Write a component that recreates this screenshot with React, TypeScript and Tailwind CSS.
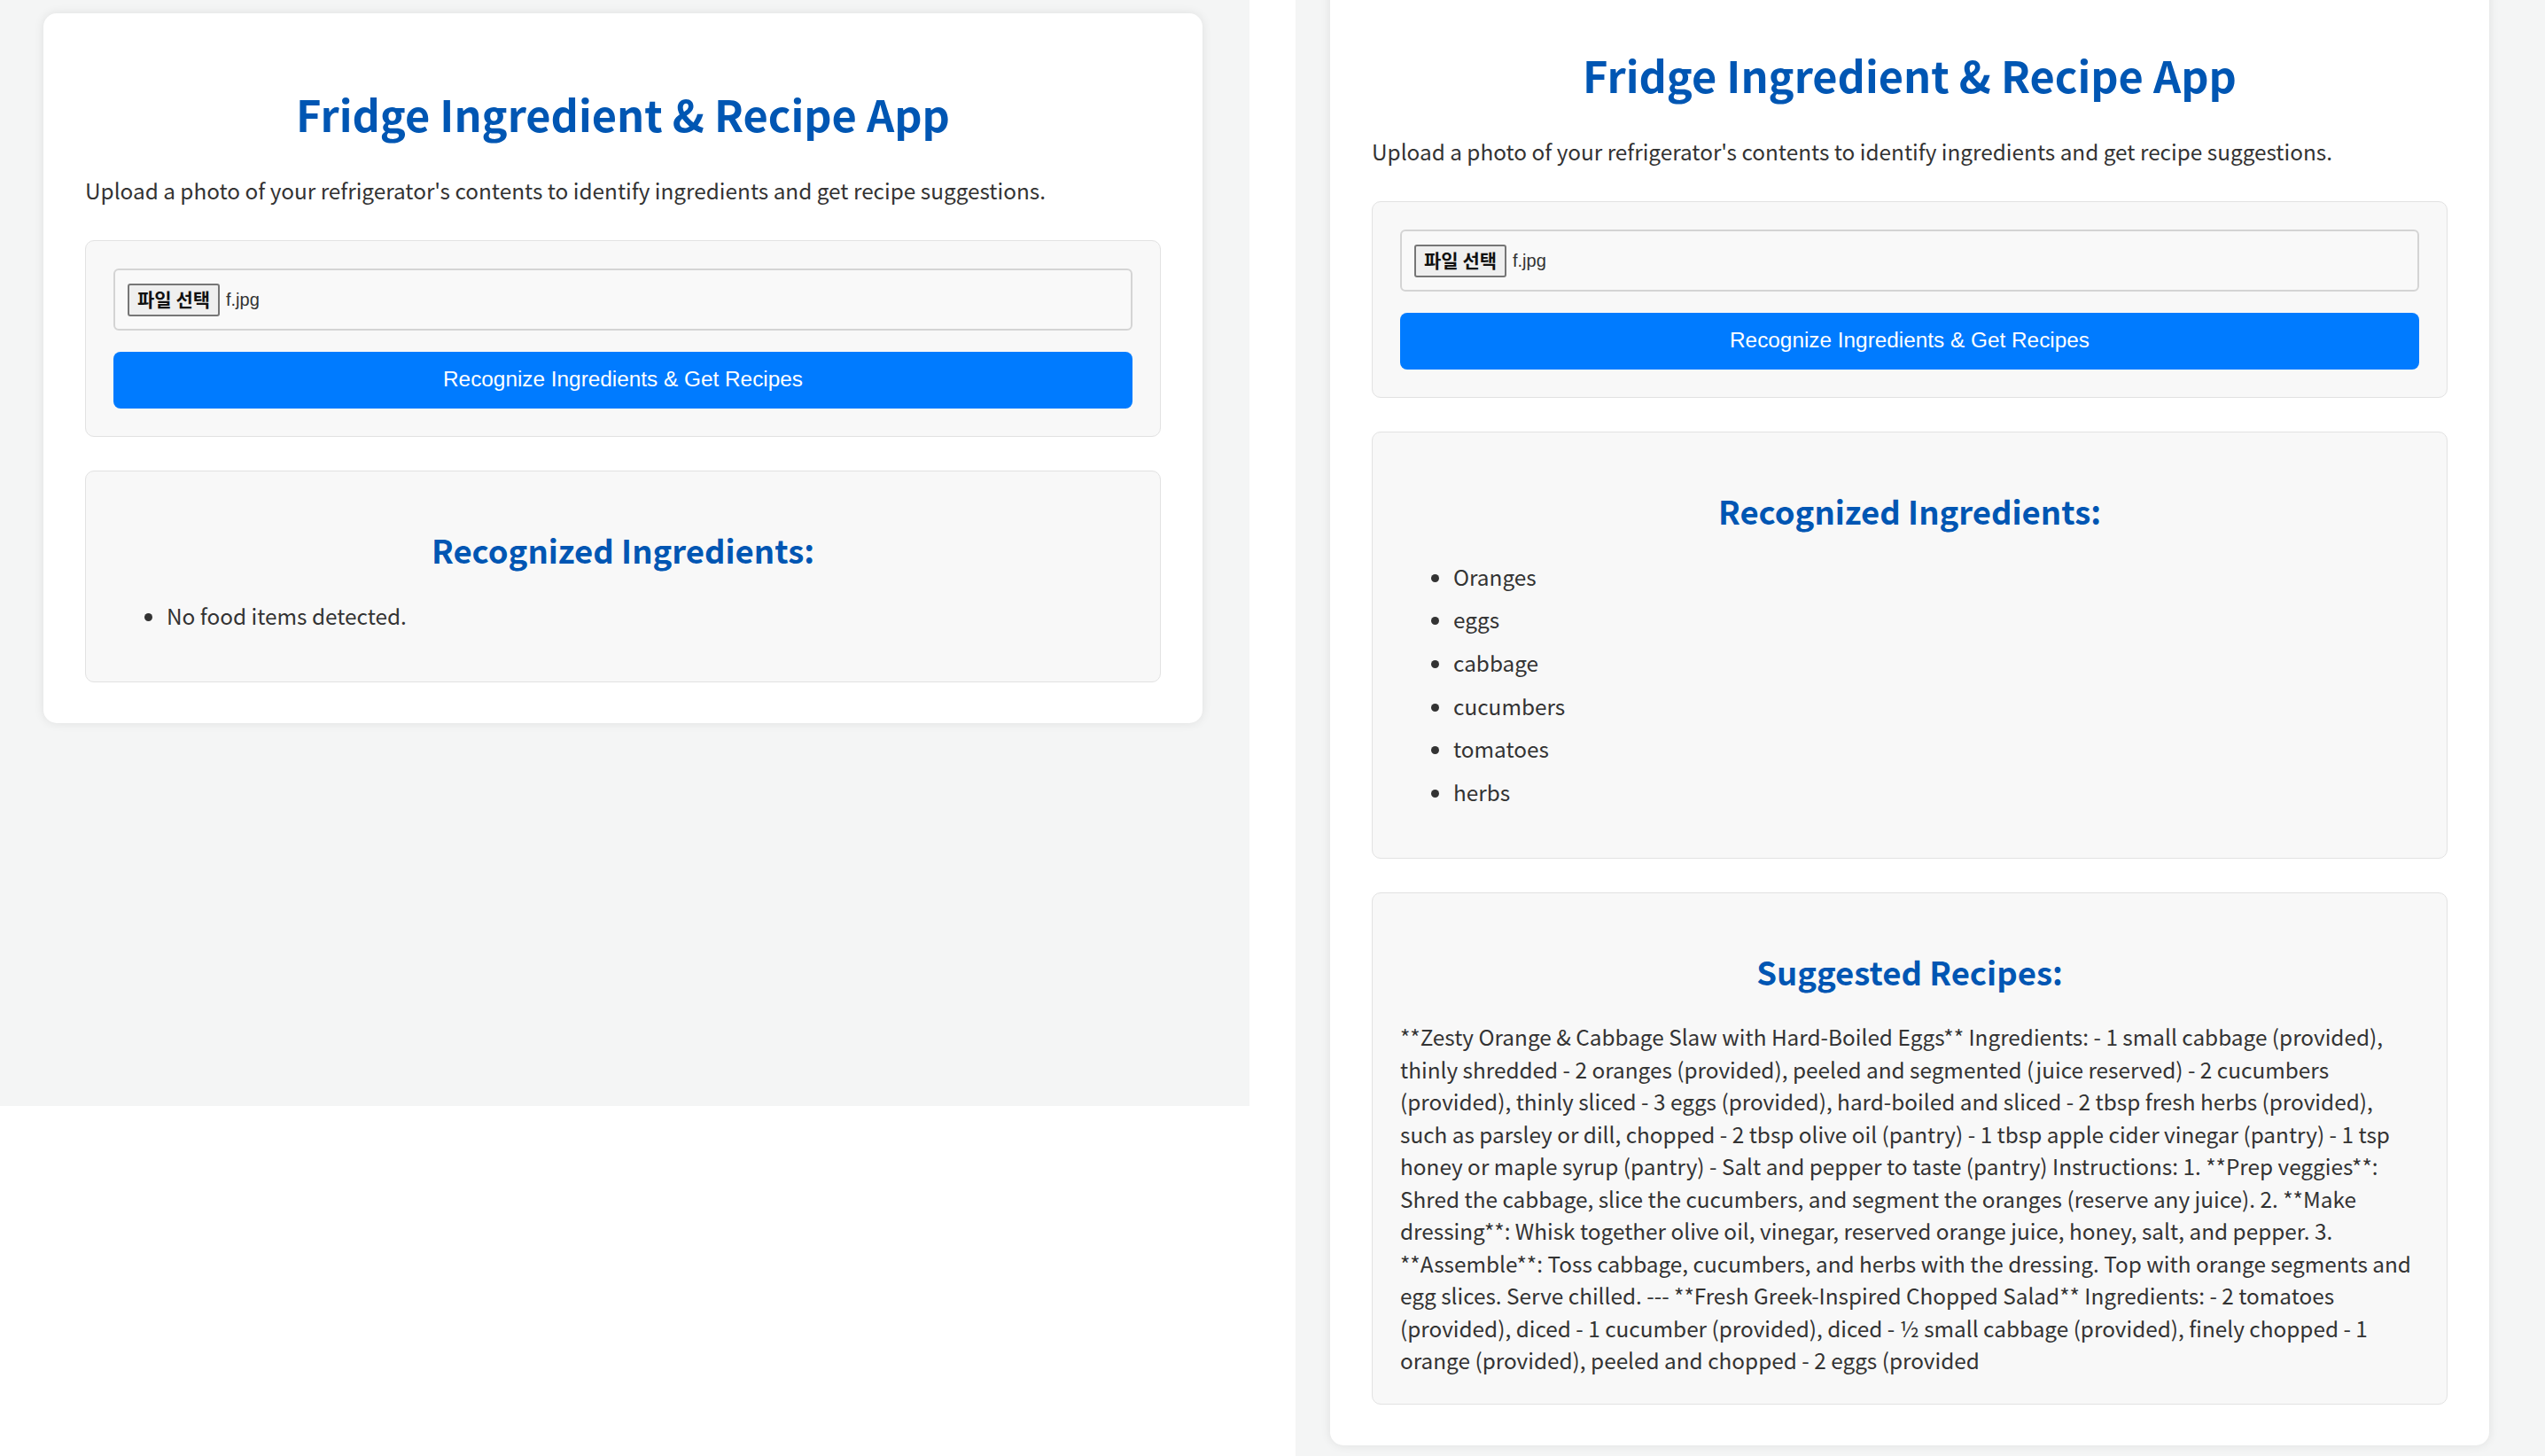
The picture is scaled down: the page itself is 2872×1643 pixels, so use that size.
import React from 'react';

// Fridge app — two captures of the same page, side by side
// left: nothing detected, right: scrolled a little, with recipes

const RECIPE_LINES = [
  '**Zesty Orange & Cabbage Slaw with Hard-Boiled Eggs** Ingredients: - 1 small cabbage (provided),',
  'thinly shredded - 2 oranges (provided), peeled and segmented (juice reserved) - 2 cucumbers',
  '(provided), thinly sliced - 3 eggs (provided), hard-boiled and sliced - 2 tbsp fresh herbs (provided),',
  'such as parsley or dill, chopped - 2 tbsp olive oil (pantry) - 1 tbsp apple cider vinegar (pantry) - 1 tsp',
  'honey or maple syrup (pantry) - Salt and pepper to taste (pantry) Instructions: 1. **Prep veggies**:',
  'Shred the cabbage, slice the cucumbers, and segment the oranges (reserve any juice). 2. **Make',
  'dressing**: Whisk together olive oil, vinegar, reserved orange juice, honey, salt, and pepper. 3.',
  '**Assemble**: Toss cabbage, cucumbers, and herbs with the dressing. Top with orange segments and',
  'egg slices. Serve chilled. --- **Fresh Greek-Inspired Chopped Salad** Ingredients: - 2 tomatoes',
  '(provided), diced - 1 cucumber (provided), diced - ½ small cabbage (provided), finely chopped - 1',
  'orange (provided), peeled and chopped - 2 eggs (provided',
];

function Section({ title, children }: { title: string; children: React.ReactNode }) {
  return (
    <section className="mt-[38px] rounded-[10px] border border-[#e2e2e2] bg-[#f8f8f8] px-[31px] pt-[31px] pb-[31px]">
      <h2 className="mt-[31px] text-center text-[36.5px] leading-[54.75px] font-bold text-[#0056b3]">{title}</h2>
      {children}
    </section>
  );
}

function FridgeCard({ ingredients, recipe }: { ingredients: string[]; recipe?: string[] }) {
  return (
    <div className="w-[1308px] shrink-0 rounded-[15px] bg-white px-[47px] pt-[84px] pb-[46px] shadow-[0_0_12px_rgba(0,0,0,0.09)]">
      <h1 className="text-center text-[48.7px] leading-[58px] font-bold text-[#0056b3]">Fridge Ingredient &amp; Recipe App</h1>
      <p className="mt-[39.5px] text-[24.35px] leading-[36px] text-[#333]">
        Upload a photo of your refrigerator&apos;s contents to identify ingredients and get recipe suggestions.
      </p>

      <div className="mt-[38.5px] rounded-[10px] border border-[#e2e2e2] bg-[#f8f8f8] p-[31px]">
        <div className="flex h-[70px] items-center rounded-[6px] border-2 border-[#d4d4d4] bg-[#f9f9f9] pl-[14px]">
          <span className="flex h-[37px] w-[104px] items-center justify-center rounded-[3px] border-2 border-[#767676] bg-[#efefef] text-[21px] font-bold text-[#111] font-['Noto_Sans_CJK_KR',sans-serif]">
            파일 선택
          </span>
          <span className="ml-[7px] text-[20px] text-[#333] font-['Liberation_Sans',Arial,sans-serif]">f.jpg</span>
        </div>
        <button className="mt-[24px] flex h-[64px] w-full items-center justify-center rounded-[8px] bg-[#007bff] pb-[2px] text-[24.35px] text-white font-['Liberation_Sans',Arial,sans-serif]">
          Recognize Ingredients &amp; Get Recipes
        </button>
      </div>

      <Section title="Recognized Ingredients:">
        <ul className="mt-[28px] mb-[25px] flex list-disc flex-col gap-[12.6px] pl-[60px] text-[24.35px] leading-[36px] text-[#333]">
          {ingredients.map((item) => (
            <li key={item}>{item}</li>
          ))}
        </ul>
      </Section>

      {recipe && (
        <Section title="Suggested Recipes:">
          <p className="mt-[28px] whitespace-nowrap text-[24.35px] leading-[36.45px] text-[#333]">
            {recipe.map((line, i) => (
              <React.Fragment key={i}>
                {line}
                {i < recipe.length - 1 && <br />}
              </React.Fragment>
            ))}
          </p>
        </Section>
      )}
    </div>
  );
}

export default function App() {
  return (
    <div className="flex h-[1643px] w-[2872px] gap-[52px] overflow-hidden bg-white font-['Noto_Sans_CJK_KR',sans-serif]">
      <div className="h-[1248px] w-[1410px] shrink-0 bg-[#f4f5f5] pt-[15px] pl-[49px]">
        <FridgeCard ingredients={['No food items detected.']} />
      </div>
      <div className="h-[1643px] w-[1410px] shrink-0 overflow-hidden bg-[#f4f5f5] pl-[39px]">
        <div className="-mt-[29px]">
          <FridgeCard
            ingredients={['Oranges', 'eggs', 'cabbage', 'cucumbers', 'tomatoes', 'herbs']}
            recipe={RECIPE_LINES}
          />
        </div>
      </div>
    </div>
  );
}
